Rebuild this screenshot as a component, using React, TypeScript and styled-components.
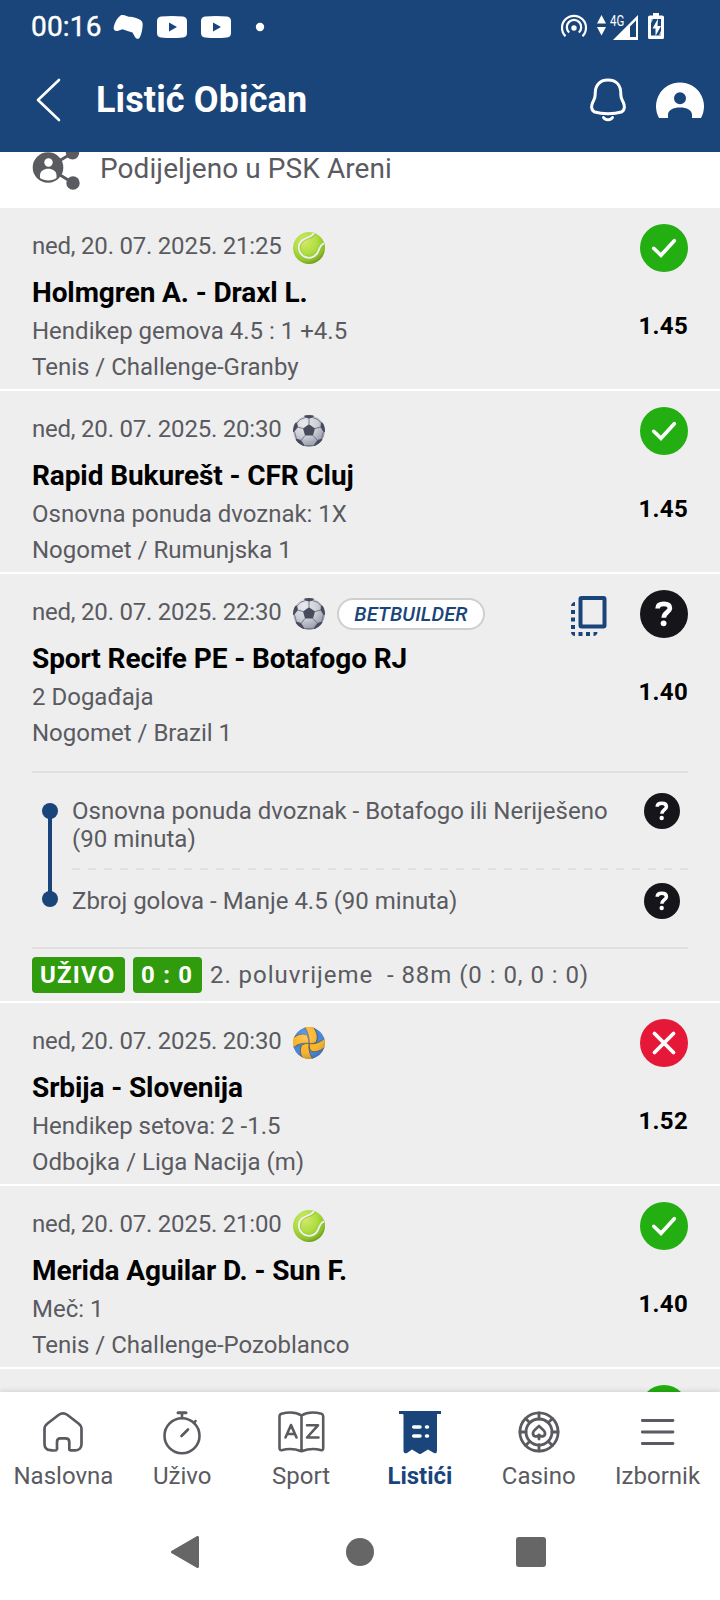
import React from "react";
import styled, { createGlobalStyle, css } from "styled-components";

const color = {
  brand: "#1a457a",
  surface: "#eeeeee",
  line: "#e0e0e0",
  muted: "#5a5a61",
  win: "#23ae12",
  lose: "#e51937",
  open: "#15151a",
  live: "#309b0c",
};

const GlobalStyle = createGlobalStyle`
  * { box-sizing: border-box; }
  html, body { margin: 0; padding: 0; background: #fff; }
  body { font-family: Roboto, "Liberation Sans", sans-serif; color: ${color.muted}; }
  svg { display: block; flex: none; }
`;

const Screen = styled.div`
  width: 720px;
  height: 1600px;
  display: flex;
  flex-direction: column;
  background: #fff;
  overflow: hidden;
`;

const Header = styled.header`
  flex: none;
  height: 152px;
  background: ${color.brand};
  color: #fff;
`;

const StatusBar = styled.div`
  height: 54px;
  padding: 0 55px 0 31px;
  display: flex;
  align-items: center;
  justify-content: space-between;
`;

const StatusGroup = styled.div`
  display: flex;
  align-items: center;
`;

const Clock = styled.span`
  font-size: 28px;
  line-height: 36px;
  font-weight: 400;
  letter-spacing: 0.2px;
  -webkit-text-stroke: 0.4px #fff;
  width: 82px;
`;

const TitleBar = styled.div`
  height: 92px;
  display: flex;
  align-items: center;
  padding: 0 16px 0 36px;
`;

const Title = styled.h1`
  flex: 1;
  margin: 0 0 0 34px;
  font-size: 36px;
  line-height: 44px;
  font-weight: 700;
  letter-spacing: 0.12px;
`;

const HeaderActions = styled.div`
  display: flex;
  align-items: center;
  gap: 30px;
`;

const Content = styled.main`
  flex: none;
  height: 1240px;
  overflow: hidden;
`;

const ShareRow = styled.div`
  height: 56px;
  display: flex;
  align-items: flex-start;
  padding-left: 32px;
  gap: 19px;
  background: #fff;
`;

const ShareLabel = styled.span`
  font-size: 28px;
  line-height: 33px;
  letter-spacing: 0.08px;
`;

const Ticket = styled.article`
  background: ${color.surface};
  border-bottom: 2px solid #fff;
  padding: 0 32px;
`;

const Match = styled.div`
  display: flex;
  height: 181px;
`;

const MatchInfo = styled.div`
  flex: 1;
  padding-top: 20px;
`;

const MetaLine = styled.div`
  display: flex;
  height: 36px;
  margin-bottom: 11px;
`;

const Kickoff = styled.span`
  width: 261px;
  font-size: 24px;
  line-height: 36px;
  letter-spacing: -0.22px;
  white-space: nowrap;
`;

const IconHolder = styled.span`
  width: 32px;
  padding-top: 4px;
`;

const Tag = styled.span`
  width: 148px;
  height: 32px;
  margin: 4px 0 0 12px;
  border: 2px solid #cfcfcf;
  border-radius: 16px;
  background: #fff;
  color: ${color.brand};
  font-size: 20px;
  line-height: 29px;
  font-style: italic;
  font-weight: 500;
  letter-spacing: 0.15px;
  text-align: center;
`;

const Teams = styled.h2`
  margin: 0 0 2px;
  font-size: 28px;
  line-height: 36px;
  font-weight: 700;
  letter-spacing: -0.1px;
  color: #000;
  white-space: nowrap;
`;

const Detail = styled.p`
  margin: 0;
  font-size: 24px;
  line-height: 36px;
  white-space: nowrap;
`;

const Outcome = styled.div`
  display: flex;
  flex-direction: column;
  align-items: flex-end;
  padding-top: 16px;
`;

const OutcomeIcons = styled.div`
  display: flex;
  align-items: flex-end;
  gap: 33px;
`;

const Odds = styled.strong`
  margin-top: 36px;
  font-size: 24px;
  line-height: 36px;
  font-weight: 700;
  letter-spacing: 0.3px;
  color: #000;
`;

const Legs = styled.div`
  height: 178px;
  margin-top: 16px;
  border-top: 2px solid ${color.line};
  border-bottom: 2px solid ${color.line};
  padding-top: 24px;
  display: flex;
`;

const LegTrack = styled.div`
  flex: none;
  width: 40px;
  padding: 6px 0 0 10px;
`;

const LegList = styled.div`
  flex: 1;
`;

const Leg = styled.div<{ $first?: boolean }>`
  display: flex;
  justify-content: space-between;
  padding-right: 8px;
  ${(p) =>
    p.$first
      ? css`
          height: 71px;
        `
      : css`
          padding-top: 13px;
        `}
`;

const LegText = styled.p<{ $first?: boolean }>`
  margin: 0;
  width: 548px;
  font-size: 24px;
  line-height: 28px;
  padding-top: ${(p) => (p.$first ? 0 : 4)}px;
`;

const LegMark = styled.span<{ $first?: boolean }>`
  margin-top: ${(p) => (p.$first ? -4 : 0)}px;
`;

const DashedRule = styled.div`
  height: 2px;
  background: repeating-linear-gradient(90deg, ${color.line} 0 8px, transparent 8px 16px);
`;

const LiveBar = styled.div`
  height: 52px;
  display: flex;
  align-items: center;
  gap: 8px;
`;

const LiveBadge = styled.span<{ $width: number }>`
  width: ${(p) => p.$width}px;
  height: 36px;
  padding-left: 8px;
  border-radius: 4px;
  background: ${color.live};
  color: #fff;
  font-size: 24px;
  line-height: 36px;
  font-weight: 700;
  letter-spacing: 1.2px;
  white-space: pre;
`;

const LiveText = styled.span`
  font-size: 24px;
  line-height: 36px;
  letter-spacing: 0.95px;
  white-space: pre;
`;

const BottomNav = styled.nav`
  position: relative;
  flex: none;
  height: 112px;
  padding: 0 3px 0 4px;
  display: flex;
  background: #fff;
  box-shadow: 0 -1px 5px rgba(0, 0, 0, 0.12);
`;

const NavItem = styled.div<{ $active?: boolean }>`
  flex: 1 1 0;
  min-width: 0;
  display: flex;
  flex-direction: column;
  align-items: center;
  padding-top: 16px;
  font-size: 24px;
  line-height: 36px;
  color: ${(p) => (p.$active ? color.brand : color.muted)};
  font-weight: ${(p) => (p.$active ? 700 : 400)};
`;

const NavLabel = styled.span`
  margin-top: 2px;
`;

const SystemNav = styled.div`
  position: relative;
  height: 96px;
  display: flex;
  align-items: center;
  padding-left: 171px;
  background: #fff;

  svg:nth-child(2) {
    margin: 0 142px 0 147px;
  }
`;

type Kind = "tennis" | "football" | "volleyball";
type Result = "win" | "lose" | "open";

const TennisBall = () => {
  const id = React.useId();
  return (
    <svg width="32" height="32" viewBox="0 0 32 32">
      <defs>
        <radialGradient id={id} cx="0.38" cy="0.3" r="0.75">
          <stop offset="0" stopColor="#d3e86a" />
          <stop offset="0.5" stopColor="#aede41" />
          <stop offset="0.8" stopColor="#8fc42b" />
          <stop offset="1" stopColor="#679417" />
        </radialGradient>
      </defs>
      <circle cx="16" cy="16" r="16" fill={`url(#${id})`} />
      <path
        d="M21.5 1.2C19 6.5 13 4.500 8.500 9.500C4.500 14 5.500 20.500 10 23.800C15 27.200 22.500 26.500 25.500 20C27 16 28.500 12 31.500 12"
        fill="none"
        stroke="#7fae2c"
        strokeWidth="3.2"
        opacity="0.5"
      />
      <path
        d="M21 1C18.500 6 12.500 4.500 8 9.500C4.200 14 5.500 20.500 10 23.800C15 27.200 22 26 25 20C26.500 16 28 12 31.200 11.600"
        fill="none"
        stroke="#eef0e8"
        strokeWidth="2"
      />
    </svg>
  );
};

const Football = () => {
  const id = React.useId();
  return (
    <svg width="32" height="32" viewBox="0 0 32 32">
      <defs>
        <radialGradient id={id} cx="0.36" cy="0.26" r="0.8">
          <stop offset="0" stopColor="#e9eaee" />
          <stop offset="0.5" stopColor="#cdcfd7" />
          <stop offset="1" stopColor="#8f93a3" />
        </radialGradient>
        <clipPath id={`${id}c`}>
          <circle cx="16" cy="16" r="16" />
        </clipPath>
      </defs>
      <g clipPath={`url(#${id}c)`}>
        <circle cx="16" cy="16" r="16" fill={`url(#${id})`} />
        <g fill="#474b5c">
          <path d="M16 9.300L22 13.500L20 20.500H12L10 13.500Z" />
          <path d="M10.500 0H21.500L20 2.500L16 3.500L12 2.500Z" />
          <path d="M0 8L4 7.500L5 12L1 17L-1 17Z" />
          <path d="M32 8L28 7.500L27.500 12L30.500 17L33 17Z" />
          <path d="M3 23.500L8 25L11.500 30.500L9 33L2 28Z" />
          <path d="M29 23.500L24.500 25L20.500 30.500L23 33L30 28Z" />
        </g>
        <path
          d="M16 3V9.500M10 13.500L4.500 12M22 13.500L28 12M12 20.500L8 25.500M20 20.500L24.500 25.500M4 8L7 4.500L12.500 2.500M28 8L25 4.500L19.500 2.500M1.500 16.500L3.500 24M30.500 16.500L28.500 24M11 30.500H21"
          fill="none"
          stroke="#6c7081"
          strokeWidth="0.9"
        />
      </g>
    </svg>
  );
};

const Volleyball = () => {
  const id = React.useId();
  return (
    <svg width="32" height="32" viewBox="0 0 32 32">
      <defs>
        <radialGradient id={id} cx="0.4" cy="0.3" r="0.75">
          <stop offset="0" stopColor="#fff" stopOpacity="0.28" />
          <stop offset="0.5" stopColor="#fff" stopOpacity="0" />
          <stop offset="1" stopColor="#1b1b33" stopOpacity="0.3" />
        </radialGradient>
        <clipPath id={`${id}c`}>
          <circle cx="16" cy="16" r="16" />
        </clipPath>
      </defs>
      <g clipPath={`url(#${id}c)`}>
        <circle cx="16" cy="16" r="16" fill="#3f83dc" />
        <g fill="#fbb426" stroke="#5c5a58" strokeWidth="1">
          <path d="M10 -1C14.500 3 16.500 9 16 16.500C20 16.800 23 16 23.500 14C25.500 9 23 3 19.500 -1Z" />
          <path d="M33 9.500C29 15 22 17.500 16 16.500C16 21 17 23.500 19 24.500C25 25.500 30 22.500 33 19Z" />
          <path d="M21 33C17 29 15.500 23 16 16.500C12 16 9.500 17.500 8 19C6.500 25 8 30 11 33Z" />
          <path d="M-1 22C4 17 10 15.500 16 16.500C16 12 15 9 13 7.500C7 6 2 9 -1 12Z" />
        </g>
        <circle cx="16" cy="16" r="16" fill={`url(#${id})`} />
      </g>
    </svg>
  );
};

const balls: Record<Kind, React.FC> = {
  tennis: TennisBall,
  football: Football,
  volleyball: Volleyball,
};

const ResultIcon = ({ result, size = 48 }: { result: Result; size?: number }) => (
  <svg width={size} height={size} viewBox="0 0 48 48">
    <circle cx="24" cy="24" r="24" fill={color[result]} />
    {result === "win" && (
      <path d="M13.700 24.300L21 31.300L34.300 16.700" fill="none" stroke="#fff" strokeWidth="3.600" strokeLinecap="round" />
    )}
    {result === "lose" && (
      <path d="M14.500 14.500L33.500 33.500M33.500 14.500L14.500 33.500" fill="none" stroke="#fff" strokeWidth="3.800" strokeLinecap="round" />
    )}
    {result === "open" && (
      <>
        <path
          d="M17.600 18.400C17.600 15 20.300 13.800 23.900 13.800C27.600 13.800 29.900 15.400 29.900 18.300C29.900 22.300 23.800 22.300 23.800 27.800"
          fill="none"
          stroke="#fff"
          strokeWidth="4.700"
        />
        <circle cx="23.600" cy="33.300" r="2.900" fill="#fff" />
      </>
    )}
  </svg>
);

const CombineIcon = () => (
  <svg width="36" height="42" viewBox="0 0 36 42" fill={color.brand}>
    <rect x="9.500" y="2" width="24" height="28.500" rx="1" fill="none" stroke={color.brand} strokeWidth="4" />
    <path d="M4 6V10H0C0 8 2 6 4 6ZM0 14H4V18H0ZM0 21.500H4V25.500H0ZM0 29H4V33H0ZM0 36H4V40C2 40 0 38.500 0 36ZM7.500 36H11.500V40H7.500ZM15 36H19V40H15ZM22.500 36H26.500C26.500 38 25 40 22.500 40Z" />
  </svg>
);

const StatusLeftIcons = () => (
  <svg width="152" height="28" viewBox="113 13 152 28" fill="#fff">
    <path d="M120.500 15.500C122 14.500 125 15.200 128.500 16.800C132 16.300 137 18 140.500 20C142.500 21.500 142.900 23 142.600 26C142.300 30 141.500 34 139.800 37.500C138.500 39.700 136 39 134.700 36.500L132.500 32.500C129 31.500 126 30.200 122.500 29.200L117.500 31C115 31.500 113.300 30 113.700 27C114.700 22.500 117 18 120.500 15.500Z" />
    <path fillRule="evenodd" d="M161 16.500Q172 15.500 183 16.500Q187 17 187 21V33Q187 37 183 37.500Q172 38.500 161 37.500Q157 37 157 33V21Q157 17 161 16.500ZM169 22.500V31.500L177 27Z" />
    <path fillRule="evenodd" d="M205 16.500Q216 15.500 227 16.500Q231 17 231 21V33Q231 37 227 37.500Q216 38.500 205 37.500Q201 37 201 33V21Q201 17 205 16.500ZM213 22.500V31.500L221 27Z" />
    <circle cx="260" cy="27" r="4.200" />
  </svg>
);

const NetworkType = styled.span`
  align-self: flex-start;
  width: 14px;
  margin: 0 -11px 0 4px;
  font-size: 14px;
  line-height: 16px;
  transform: scaleX(0.82);
  transform-origin: left;
`;

const StatusRight = styled.div`
  display: flex;
  align-items: center;
  height: 28px;
`;

const HotspotIcon = () => (
  <svg width="46" height="28" viewBox="560 13 46 28" fill="none" stroke="#fff" strokeWidth="2.200">
    <path d="M565.500 36.300A12 12 0 1 1 582.500 36.300" />
    <path d="M569.200 32.500A7.200 7.200 0 1 1 578.800 32.500" />
    <circle cx="574" cy="28" r="2.700" fill="#fff" stroke="none" />
    <path d="M597 23.500L601.500 15L606 23.500ZM597 27L601.500 35.500L606 27Z" fill="#fff" stroke="none" />
  </svg>
);

const SignalIcon = () => (
  <svg width="52" height="28" viewBox="613 13 52 28" fill="#fff">
    <path fillRule="evenodd" d="M638 15V40H613ZM636 20.500L630 26.500V37H636Z" />
    <path fillRule="evenodd" d="M653 15.500V13H659V15.500H662Q664 15.500 664 17V37.500Q664 39 662.500 39H649.500Q648 39 648 37.500V17Q648 15.500 650 15.500ZM651 19V35.500H661V19Z" />
    <path d="M658 18.500L652.500 28.500H655.500V36L661 26H657.500Z" />
    <path d="M650 19H653L651.500 23ZM662 35.500H659L660.500 31Z" opacity="0.700" />
  </svg>
);

const BackIcon = () => (
  <svg width="26" height="44" viewBox="0 0 26 44">
    <path d="M23 2L2 22L23 42" fill="none" stroke="#fff" strokeWidth="2.600" strokeLinecap="round" strokeLinejoin="round" />
  </svg>
);

const BellIcon = () => (
  <svg width="36" height="44" viewBox="0 0 36 44" fill="none" stroke="#fff" strokeWidth="3" strokeLinecap="round" strokeLinejoin="round">
    <path d="M18 2C9 2 5.200 8 5.200 15.500C5.500 20 4 21.500 2.700 24.500C1 28 1.200 32.500 4.700 34C12 36.300 24 36.300 31.300 34C34.800 32.500 35 28 33.300 24.500C32 21.500 30.500 20 30.800 15.500C30.800 8 27 2 18 2Z" />
    <path d="M13.500 39.500C15.500 42.500 20.500 42.500 22.500 39.500" />
  </svg>
);

const ProfileIcon = () => (
  <svg width="48" height="36" viewBox="0 0 48 36">
    <path
      fillRule="evenodd"
      fill="#fff"
      d="M3 36A24 24 0 1 1 45 36H36V33C36 28 31 25.500 24 25.500S12 28 12 33V36ZM24 10.200A6 6 0 1 0 24 22.200A6 6 0 1 0 24 10.200Z"
    />
  </svg>
);

const SharedIcon = () => (
  <svg width="49" height="38" viewBox="32 152 49 38" fill={color.muted}>
    <path d="M48 167.500L72.500 153M48 167.500L73 183" stroke={color.muted} strokeWidth="3" />
    <circle cx="72.500" cy="152.800" r="6.700" />
    <circle cx="73" cy="183" r="6.700" />
    <circle cx="48" cy="167.500" r="15.300" />
    <circle cx="48.500" cy="162.500" r="4.200" fill="#fff" />
    <path d="M40 178V175.500C40 171 44 168.800 48.200 168.800S56.500 171 56.500 175.500V178C53 181.200 44 181.200 40 178Z" fill="#fff" />
  </svg>
);

const HomeIcon = () => (
  <svg width="46" height="48" viewBox="0 0 46 48" fill="none" stroke="currentColor" strokeWidth="2.700" strokeLinejoin="round">
    <path d="M17 42C16 42.800 14 42.500 10.500 42.200C6.500 42 4.500 39.500 4.500 36V21C4.500 18.500 5.500 17 7.500 15.500L18.500 7C21.500 4.900 24.500 4.900 27.500 7L38.500 15.500C40.500 17 41.500 18.500 41.500 21V36C41.500 40 39 42.300 35.500 42.300H31C29.800 42.300 29.300 42 29.300 41V34C29.300 31.500 28 30.300 25.500 30.300H20.500C18 30.300 17 31.500 17 34V42" />
  </svg>
);

const StopwatchIcon = () => (
  <svg width="46" height="48" viewBox="0 0 46 48" fill="none" stroke="currentColor" strokeWidth="2.600" strokeLinecap="round">
    <circle cx="23" cy="27.800" r="17.500" />
    <path d="M23 10V5M22.500 28L29 21.500M35 15L36.500 13" />
    <path d="M19 4.700H27" strokeWidth="3" />
  </svg>
);

const BookIcon = () => (
  <svg width="48" height="48" viewBox="0 0 48 48" fill="none" stroke="currentColor" strokeWidth="2.600" strokeLinecap="round" strokeLinejoin="round">
    <path d="M24.500 7.500C19 3.900 11.500 3.900 4.500 5.700C3 6.200 2.500 7 2.500 8.500V40C2.500 42 3.500 42.500 5.500 42C12.500 40 18.500 41 24.500 43.200C30.500 41 36.500 40 43.500 42C45.500 42.500 46.200 42 46.200 40V8.500C46.200 7 46 6.200 44.500 5.700C37.500 3.900 30 3.900 24.500 7.500ZM24.500 7.500V43.200" />
    <path d="M8.500 29.500L14 17L19.500 29.500M10.500 26H17.500M30 17.300H41L30 29.500H41.500" />
  </svg>
);

const TicketsIcon = () => (
  <svg width="46" height="48" viewBox="0 0 46 48" fill={color.brand}>
    <path d="M2 4.500H44M6 5H40" stroke={color.brand} strokeWidth="3" />
    <path d="M6.500 5H40V42.500Q40 46 37 45L31 41.500L24 45.700Q23 46.300 22 45.700L15 41.500L10 45Q6.500 46 6.500 42.500Z" />
    <path d="M16.700 19H23M29.500 19H30.500M16.700 28H23M29.500 28H30.500" stroke="#fff" strokeWidth="3.500" strokeLinecap="round" />
  </svg>
);

const CasinoIcon = () => (
  <svg width="46" height="48" viewBox="0 0 46 48" fill="none" stroke="currentColor" strokeWidth="2.800" strokeLinecap="round" strokeLinejoin="round">
    <circle cx="23" cy="24" r="19.100" />
    <circle cx="23" cy="24" r="13" />
    <path d="M23 5V11M23 37V43M4 24H10M36 24H42M9.600 10.600L13.800 14.800M32.200 33.200L36.400 37.400M36.400 10.600L32.200 14.800M13.800 33.200L9.600 37.400" />
    <path d="M23 18C21 20.500 17 22 17 25.500C17 28.500 20.500 29.500 23 27C25.500 29.500 29 28.500 29 25.500C29 22 25 20.500 23 18ZM23 27V31" />
  </svg>
);

const MenuIcon = () => (
  <svg width="46" height="48" viewBox="0 0 46 48" fill="none" stroke="currentColor" strokeWidth="2.800" strokeLinecap="round">
    <path d="M7.300 12.500H38M7.300 24H38M7.300 35.500H38" />
  </svg>
);

const bets: { time: string; kind: Kind; teams: string; pick: string; league: string; odds: string; result: Result; builder?: boolean }[] = [
  { time: "21:25", kind: "tennis", teams: "Holmgren A. - Draxl L.", pick: "Hendikep gemova 4.5 : 1 +4.5", league: "Tenis / Challenge-Granby", odds: "1.45", result: "win" },
  { time: "20:30", kind: "football", teams: "Rapid Bukurešt - CFR Cluj", pick: "Osnovna ponuda dvoznak: 1X", league: "Nogomet / Rumunjska 1", odds: "1.45", result: "win" },
  { time: "22:30", kind: "football", teams: "Sport Recife PE - Botafogo RJ", pick: "2 Događaja", league: "Nogomet / Brazil 1", odds: "1.40", result: "open", builder: true },
  { time: "20:30", kind: "volleyball", teams: "Srbija - Slovenija", pick: "Hendikep setova: 2 -1.5", league: "Odbojka / Liga Nacija (m)", odds: "1.52", result: "lose" },
  { time: "21:00", kind: "tennis", teams: "Merida Aguilar D. - Sun F.", pick: "Meč: 1", league: "Tenis / Challenge-Pozoblanco", odds: "1.40", result: "win" },
];

const BuilderDetails = () => (
  <>
    <Legs>
      <LegTrack>
        <svg width="16" height="104" viewBox="0 0 16 104" fill={color.brand}>
          <path d="M6 8H10V96H6Z" />
          <circle cx="8" cy="8" r="8" />
          <circle cx="8" cy="96" r="8" />
        </svg>
      </LegTrack>
      <LegList>
        <Leg $first>
          <LegText $first>Osnovna ponuda dvoznak - Botafogo ili Neriješeno (90 minuta)</LegText>
          <LegMark $first>
            <ResultIcon result="open" size={36} />
          </LegMark>
        </Leg>
        <DashedRule />
        <Leg>
          <LegText>Zbroj golova - Manje 4.5 (90 minuta)</LegText>
          <LegMark>
            <ResultIcon result="open" size={36} />
          </LegMark>
        </Leg>
      </LegList>
    </Legs>
    <LiveBar>
      <LiveBadge $width={93}>UŽIVO</LiveBadge>
      <LiveBadge $width={69}>0 : 0</LiveBadge>
      <LiveText>{"2. poluvrijeme  - 88m (0 : 0, 0 : 0)"}</LiveText>
    </LiveBar>
  </>
);

const navItems = [
  { label: "Naslovna", Icon: HomeIcon },
  { label: "Uživo", Icon: StopwatchIcon },
  { label: "Sport", Icon: BookIcon },
  { label: "Listići", Icon: TicketsIcon, active: true },
  { label: "Casino", Icon: CasinoIcon },
  { label: "Izbornik", Icon: MenuIcon },
];

export default function App() {
  return (
    <>
      <GlobalStyle />
      <Screen>
        <Header>
          <StatusBar>
            <StatusGroup>
              <Clock>00:16</Clock>
              <StatusLeftIcons />
            </StatusGroup>
            <StatusRight>
              <HotspotIcon />
              <NetworkType>4G</NetworkType>
              <SignalIcon />
            </StatusRight>
          </StatusBar>
          <TitleBar>
            <BackIcon />
            <Title>Listić Običan</Title>
            <HeaderActions>
              <BellIcon />
              <ProfileIcon />
            </HeaderActions>
          </TitleBar>
        </Header>
        <Content>
          <ShareRow>
            <SharedIcon />
            <ShareLabel>Podijeljeno u PSK Areni</ShareLabel>
          </ShareRow>
          {bets.map((bet) => {
            const Ball = balls[bet.kind];
            return (
              <Ticket key={bet.teams}>
                <Match>
                  <MatchInfo>
                    <MetaLine>
                      <Kickoff>ned, 20. 07. 2025. {bet.time}</Kickoff>
                      <IconHolder>
                        <Ball />
                      </IconHolder>
                      {bet.builder && <Tag>BETBUILDER</Tag>}
                    </MetaLine>
                    <Teams>{bet.teams}</Teams>
                    <Detail>{bet.pick}</Detail>
                    <Detail>{bet.league}</Detail>
                  </MatchInfo>
                  <Outcome>
                    <OutcomeIcons>
                      {bet.builder && <CombineIcon />}
                      <ResultIcon result={bet.result} />
                    </OutcomeIcons>
                    <Odds>{bet.odds}</Odds>
                  </Outcome>
                </Match>
                {bet.builder && <BuilderDetails />}
              </Ticket>
            );
          })}
          <Ticket>
            <Match>
              <MatchInfo />
              <Outcome>
                <ResultIcon result="win" />
              </Outcome>
            </Match>
          </Ticket>
        </Content>
        <BottomNav>
          {navItems.map(({ label, Icon, active }) => (
            <NavItem key={label} $active={active}>
              <Icon />
              <NavLabel>{label}</NavLabel>
            </NavItem>
          ))}
        </BottomNav>
        <SystemNav>
          <svg width="28" height="32" viewBox="0 0 28 32">
            <path d="M1.500 16L26.500 1.500V30.500Z" fill="#666" stroke="#666" strokeWidth="3" strokeLinejoin="round" />
          </svg>
          <svg width="28" height="28" viewBox="0 0 28 28">
            <circle cx="14" cy="14" r="14" fill="#666" />
          </svg>
          <svg width="30" height="30" viewBox="0 0 30 30">
            <rect width="30" height="30" rx="3" fill="#666" />
          </svg>
        </SystemNav>
      </Screen>
    </>
  );
}
